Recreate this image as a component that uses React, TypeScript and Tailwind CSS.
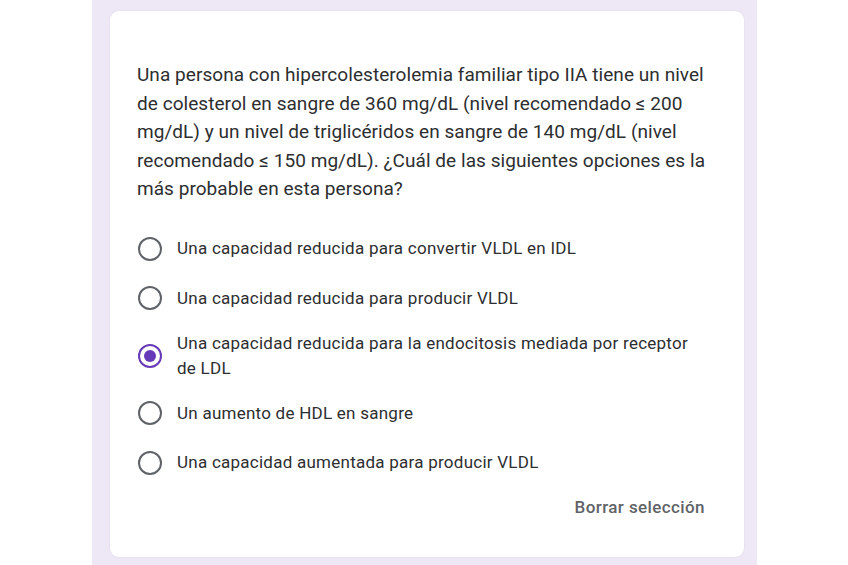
import React from "react";

const options = [
  "Una capacidad reducida para convertir VLDL en IDL",
  "Una capacidad reducida para producir VLDL",
  "Una capacidad reducida para la endocitosis mediada por receptor de LDL",
  "Un aumento de HDL en sangre",
  "Una capacidad aumentada para producir VLDL",
];

function Radio({ checked }: { checked: boolean }) {
  return (
    <div className="w-[40px] h-[40px] flex items-center justify-center shrink-0">
      {checked ? (
        <div className="w-[24px] h-[24px] rounded-full border-[2.5px] border-[#673ab7] flex items-center justify-center">
          <div className="w-[12px] h-[12px] rounded-full bg-[#673ab7]" />
        </div>
      ) : (
        <div className="w-[24px] h-[24px] rounded-full border-[2.5px] border-[#5f6368]" />
      )}
    </div>
  );
}

export default function App() {
  return (
    <div
      className="w-[848px] h-[565px] bg-white flex"
      style={{ fontFamily: "Roboto, 'Noto Sans', Arial, sans-serif" }}
    >
      <div className="ml-[92px] w-[665px] h-[565px] bg-[#ede7f6] pt-[11px] pl-[18px]">
        <div className="w-[634px] h-[546px] bg-white rounded-[9px] shadow-[0_0_2px_rgba(0,0,0,0.08)] pl-[27px] pr-[27px] pt-[50px] flex flex-col">
          <p className="text-[19px] leading-[28.5px] text-[#2d2e30] tracking-[0.05px]">
            Una persona con hipercolesterolemia familiar tipo IIA tiene un nivel de colesterol en sangre de 360 mg/dL (nivel recomendado ≤ 200 mg/dL) y un nivel de triglicéridos en sangre de 140 mg/dL (nivel recomendado ≤ 150 mg/dL). ¿Cuál de las siguientes opciones es la más probable en esta persona?
          </p>
          <div className="mt-[25px] flex flex-col gap-[9.5px] -ml-[7px]">
            {options.map((o, i) => (
              <div key={i} className="flex items-center">
                <Radio checked={i === 2} />
                <div className="pl-[7px] py-[3px] text-[17px] leading-[25px] text-[#2d2e30] tracking-[0.25px] pr-[20px]">
                  {o}
                </div>
              </div>
            ))}
          </div>
          <div className="flex justify-end mt-[12px] pr-[12px]">
            <span className="text-[17px] font-medium text-[#5f6368] leading-[24px] tracking-[0.4px]">
              Borrar selección
            </span>
          </div>
        </div>
      </div>
    </div>
  );
}
